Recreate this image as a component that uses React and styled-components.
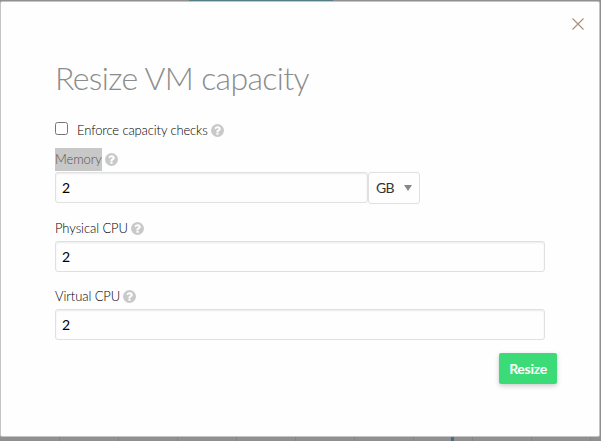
import { useState } from "react";
import styled, { createGlobalStyle } from "styled-components";

export default function App() {
    const [enforce, setEnforce] = useState(false)
    const [memory, setMemory] = useState("2")
    const [physical, setPhysical] = useState("2")
    const [virtual, setVirtual] = useState("2")

    return (
        <>
            <GlobalStyle />
            <Backdrop>
                <Modal>
                    <Close aria-label="Close">
                        <svg width="12" height="12" viewBox="0 0 12 12">
                            <path d="M0.5 0.5L11.5 11.5M11.5 0.5L0.5 11.5" stroke="#a98e78" strokeWidth="1.1" />
                        </svg>
                    </Close>
                    <Title>Resize VM capacity</Title>
                    <CheckRow>
                        <Checkbox type="checkbox" checked={enforce} onChange={e => setEnforce(e.target.checked)} />
                        <span>Enforce capacity checks</span>
                        <Help />
                    </CheckRow>
                    <Label $top={3}>
                        <Selected>Memory</Selected>
                        <Help />
                    </Label>
                    <MemoryRow>
                        <Input $width={313} value={memory} onChange={e => setMemory(e.target.value)} />
                        <Unit>
                            <span>GB</span>
                            <svg width="8" height="6" viewBox="0 0 8 6">
                                <path d="M0 0H8L4 6Z" fill="#888" />
                            </svg>
                        </Unit>
                    </MemoryRow>
                    <Label $top={12}>
                        <span>Physical CPU</span>
                        <Help />
                    </Label>
                    <Field>
                        <Input value={physical} onChange={e => setPhysical(e.target.value)} />
                    </Field>
                    <Label $top={12}>
                        <span>Virtual CPU</span>
                        <Help />
                    </Label>
                    <Field>
                        <Input value={virtual} onChange={e => setVirtual(e.target.value)} />
                    </Field>
                    <Footer>
                        <Button>Resize</Button>
                    </Footer>
                </Modal>
            </Backdrop>
        </>
    )
}

function Help() {
    return (
        <HelpIcon width="13" height="13" viewBox="0 0 1536 1536">
            <circle cx="768" cy="768" r="768" fill="#c9c9c9" />
            <path
                d="M896 1248v-192q0-14-9-23t-23-9h-192q-14 0-23 9t-9 23v192q0 14 9 23t23 9h192q14 0 23-9t9-23zM1152 576q0-88-55.500-163t-138.500-116-170-41q-243 0-371 213-15 24 8 42l132 100q7 6 19 6 16 0 25-12 53-68 86-92 34-24 86-24 48 0 85.500 26t37.500 59q0 38-20 61t-68 45q-63 28-115.500 86.500t-52.500 125.500v36q0 14 9 23t23 9h192q14 0 23-9t9-23q0-19 21.500-49.500t54.500-49.500q32-18 49-28.500t46-35 44.500-48 28-60.500 12.500-81z"
                fill="#fff"
            />
        </HelpIcon>
    )
}

const GlobalStyle = createGlobalStyle`
    *{
        box-sizing: border-box;
    }
    body{
        margin: 0;
        overflow: hidden;
        font-family: "Lato", "Liberation Sans", sans-serif;
    }
`

const Backdrop = styled.div`
    width: 601px;
    height: 441px;
    padding: 1px 1px 0 0;
    background:
        linear-gradient(#3b7181, #3b7181) 451px 437px / 3px 4px no-repeat,
        linear-gradient(#567e89, #567e89) 189px 0 / 144px 1px no-repeat,
        repeating-linear-gradient(90deg, transparent 0 58px, #858585 58px 59px) 1px 437px / 600px 4px no-repeat,
        #909090;
`

const Modal = styled.div`
    position: relative;
    width: 600px;
    height: 436px;
    padding: 57px 54px 0;
    border: 1px solid #c4c4c4;
    border-radius: 2px;
    background-color: #fefefe;
`

const Close = styled.button`
    position: absolute;
    top: 16px;
    right: 15px;
    display: flex;
    padding: 0;
    border: 0;
    background: none;
`

const Title = styled.h1`
    height: 57px;
    margin: 0;
    color: #8c8c8c;
    font-size: 32px;
    font-weight: 300;
    letter-spacing: -0.65px;
    line-height: 38px;
    white-space: nowrap;
`

const CheckRow = styled.label`
    display: flex;
    align-items: center;
    height: 28px;
    color: #000;
    font-size: 13px;
    font-weight: 300;
    letter-spacing: -0.12px;
    line-height: 23px;
`

const Checkbox = styled.input`
    width: 13px;
    height: 13px;
    margin: 0 9px 4px 0;
`

const Label = styled.div`
    display: flex;
    align-items: center;
    height: 24px;
    margin-top: ${({ $top }) => $top}px;
    color: #000;
    font-size: 13px;
    font-weight: 300;
    letter-spacing: -0.08px;
    line-height: 23px;
`

const Selected = styled.span`
    background-color: #c8c8c8;
    color: #555;
`

const HelpIcon = styled.svg`
    flex: none;
    margin-left: 3px;
`

const MemoryRow = styled.div`
    display: flex;
    height: 32px;
    margin-top: 1px;
`

const Field = styled.div`
    padding-top: 1px;
`

const Input = styled.input`
    display: block;
    width: ${({ $width }) => $width || 490}px;
    height: 31px;
    padding: 0 6px 1px;
    border: 1px solid #e0e0e0;
    border-radius: 3px;
    outline: 0;
    background-color: #fefefe;
    box-shadow: inset 0 1px 2px rgba(0, 0, 0, 0.08);
    color: #000;
    font-family: inherit;
    font-size: 14px;
`

const Unit = styled.div`
    display: flex;
    align-items: center;
    justify-content: space-between;
    width: 52px;
    height: 32px;
    padding: 0 7px 1px;
    border: 1px solid #e0e0e0;
    border-radius: 3px;
    color: #333;
    font-size: 14px;
    letter-spacing: -0.8px;
`

const Footer = styled.div`
    display: flex;
    justify-content: flex-end;
    margin: 13px -12px 0 0;
`

const Button = styled.button`
    width: 58px;
    height: 31px;
    padding: 0;
    border: 0;
    border-radius: 2px;
    background-color: #3bdb78;
    box-shadow: 0 2px 5px rgba(0, 0, 0, 0.2);
    color: #fff;
    font-family: inherit;
    font-size: 14px;
    font-weight: 700;
    letter-spacing: -0.3px;
`
